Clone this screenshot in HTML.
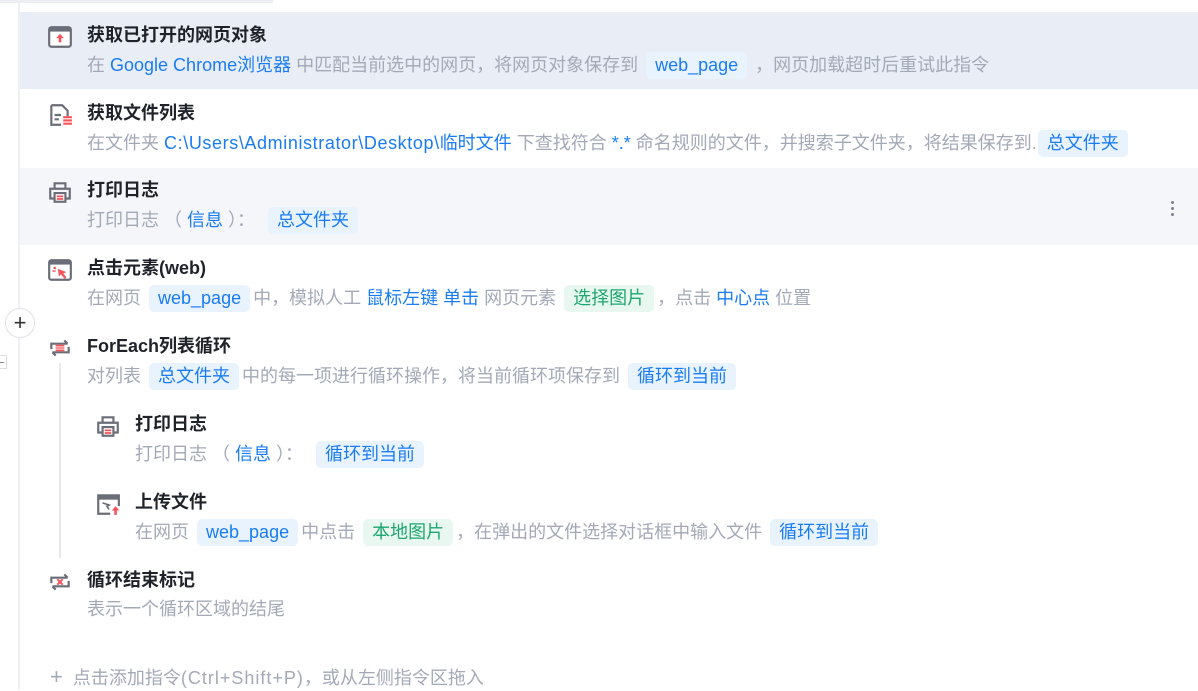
<!DOCTYPE html>
<html><head><meta charset="utf-8"><style>
*{margin:0;padding:0;box-sizing:border-box}
body{width:1198px;height:690px;background:#fff;position:relative;overflow:hidden;font-family:"Liberation Sans","Noto Sans CJK SC",sans-serif}
.bar{position:absolute;left:0;top:0;width:273px;height:3px;background:#eceef3}
.vl{position:absolute;left:18px;top:0;width:2px;height:690px;background:#eef0f5}
.row{position:absolute;left:20px;right:0;height:77px}
.t{position:absolute;font-size:18px;font-weight:bold;color:#1f2329;white-space:nowrap;line-height:24px}
.d{position:absolute;font-size:18px;color:#a3a9b7;white-space:nowrap;line-height:26px}
.b{color:#1a7cf5}
.tag{display:inline-block;background:#e9f3fe;color:#1a7cf5;padding:0 9px;border-radius:5px;line-height:27px;margin:0 3px}
.g{background:#e8f8f0;color:#1ea672}
.ic{position:absolute;width:26px;height:26px}
</style></head><body>
<div class="bar"></div>
<div class="vl"></div>
<div class="row" style="top:12px;background:#e9edf5"></div>
<div class="row" style="top:168px;background:#f4f6fa"></div>

<svg class="ic" style="left:47px;top:24px" viewBox="0 0 24 24"><rect x="2" y="3" width="20" height="18" rx="2" fill="#fff" stroke="#6b6e78" stroke-width="2"/><rect x="2" y="3" width="20" height="4" fill="#6b6e78"/><path d="M12 9l-3.5 4h2.3v4h2.4v-4h2.3z" fill="#f4545a"/></svg>
<svg class="ic" style="left:47px;top:102px" viewBox="0 0 24 24"><path d="M4 3h10l5 5v5M4 3v18h9" fill="none" stroke="#6b6e78" stroke-width="2"/><path d="M7 12h6M7 16h4" stroke="#6b6e78" stroke-width="2"/><path d="M15 14h8M15 17h8M15 20h8" stroke="#f4545a" stroke-width="2"/></svg>
<svg class="ic" style="left:47px;top:179px" viewBox="0 0 24 24"><path d="M7 8V4h10v4M6 18H3v-9h18v9h-3" fill="none" stroke="#6b6e78" stroke-width="2"/><rect x="7" y="13" width="10" height="8" fill="#fff" stroke="#6b6e78" stroke-width="2"/><path d="M9 16h6M9 18.5h6" stroke="#f4545a" stroke-width="1.6"/></svg>
<svg class="ic" style="left:47px;top:257px" viewBox="0 0 24 24"><rect x="2" y="3" width="20" height="18" rx="2" fill="#fff" stroke="#6b6e78" stroke-width="2"/><rect x="2" y="3" width="20" height="4" fill="#6b6e78"/><path d="M10 11l8 3-3 1 3 4-2 1-3-4-2 2z" fill="#f4545a"/><path d="M6 10l2 1M5 13h3M7 9l1 2" stroke="#f4545a" stroke-width="1.3"/></svg>
<svg class="ic" style="left:47px;top:335px" viewBox="0 0 24 24"><path d="M4 13V8h15M16 5l3 3M20 11v5H5M8 19l-3-3" fill="none" stroke="#6b6e78" stroke-width="2"/><rect x="8" y="9" width="8" height="6" fill="#f4545a"/><path d="M8 11h8M8 13h8" stroke="#fff" stroke-width="0.8"/></svg>
<svg class="ic" style="left:95px;top:413px" viewBox="0 0 24 24"><path d="M7 8V4h10v4M6 18H3v-9h18v9h-3" fill="none" stroke="#6b6e78" stroke-width="2"/><rect x="7" y="13" width="10" height="8" fill="#fff" stroke="#6b6e78" stroke-width="2"/><path d="M9 16h6M9 18.5h6" stroke="#f4545a" stroke-width="1.6"/></svg>
<svg class="ic" style="left:95px;top:491px" viewBox="0 0 24 24"><path d="M14 21H3V4h19v10" fill="none" stroke="#6b6e78" stroke-width="2"/><rect x="3" y="4" width="19" height="4" fill="#6b6e78"/><path d="M7 11l6 2-2 1 2 3" fill="none" stroke="#6b6e78" stroke-width="1.5"/><path d="M19 14l-3.5 4h2.3v4h2.4v-4h2.3z" fill="#f4545a"/></svg>
<svg class="ic" style="left:47px;top:569px" viewBox="0 0 24 24"><path d="M4 13V8h15M16 5l3 3M20 11v5H5M8 19l-3-3" fill="none" stroke="#6b6e78" stroke-width="2"/><path d="M9.5 9.5l5 5M14.5 9.5l-5 5" stroke="#f4545a" stroke-width="1.8"/></svg>

<div class="t" style="left:87px;top:23px">获取已打开的网页对象</div>
<div class="d" style="left:87px;top:52px">在 <span class="b">Google Chrome浏览器</span> 中匹配当前选中的网页，将网页对象保存到 <span class="tag">web_page</span> ，网页加载超时后重试此指令</div>

<div class="t" style="left:87px;top:101px">获取文件列表</div>
<div class="d" style="left:87px;top:130px">在文件夹 <span class="b" style="letter-spacing:0.6px">C:\Users\Administrator\Desktop\</span><span class="b">临时文件</span> 下查找符合 <span class="b">*.*</span> 命名规则的文件，并搜索子文件夹，将结果保存到.<span class="tag" style="margin-left:1px">总文件夹</span></div>

<div class="t" style="left:87px;top:178px">打印日志</div>
<div class="d" style="left:87px;top:207px">打印日志 （ <span class="b">信息</span> ）： <span class="tag" style="margin-left:8px">总文件夹</span></div>
<div style="position:absolute;left:1171px;top:201px;width:3px">
<div style="width:3px;height:3px;border-radius:2px;background:#7b8190;margin-bottom:3px"></div><div style="width:3px;height:3px;border-radius:2px;background:#7b8190;margin-bottom:3px"></div><div style="width:3px;height:3px;border-radius:2px;background:#7b8190"></div></div>

<div class="t" style="left:87px;top:256px">点击元素(web)</div>
<div class="d" style="left:87px;top:285px">在网页 <span class="tag">web_page</span>中，模拟人工 <span class="b">鼠标左键</span> <span class="b">单击</span> 网页元素 <span class="tag g">选择图片</span>，点击 <span class="b">中心点</span> 位置</div>

<div class="t" style="left:87px;top:334px">ForEach列表循环</div>
<div class="d" style="left:87px;top:363px">对列表 <span class="tag">总文件夹</span>中的每一项进行循环操作，将当前循环项保存到 <span class="tag">循环到当前</span></div>

<div style="position:absolute;left:59px;top:363px;width:2px;height:195px;background:#e6e8ee"></div>

<div class="t" style="left:135px;top:412px">打印日志</div>
<div class="d" style="left:135px;top:441px">打印日志 （ <span class="b">信息</span> ）： <span class="tag" style="margin-left:8px">循环到当前</span></div>

<div class="t" style="left:135px;top:490px">上传文件</div>
<div class="d" style="left:135px;top:519px">在网页 <span class="tag">web_page</span>中点击 <span class="tag g">本地图片</span>，在弹出的文件选择对话框中输入文件 <span class="tag">循环到当前</span></div>

<div class="t" style="left:87px;top:568px">循环结束标记</div>
<div class="d" style="left:87px;top:596px">表示一个循环区域的结尾</div>

<div style="position:absolute;left:5px;top:308px;width:30px;height:30px;border-radius:50%;border:1px solid #dfe2e8;background:#fff;text-align:center;line-height:27px;font-size:22px;color:#333">+</div>
<div style="position:absolute;left:-2px;top:355px;width:9px;height:14px;border:1px solid #d8dbe2;background:#fff"><div style="position:absolute;left:0;top:6px;width:5px;height:1px;background:#888"></div></div>

<div class="d" style="left:50px;top:664px"><span style="font-size:22px;margin-right:10px">+</span>点击添加指令<span style="letter-spacing:1px">(Ctrl+Shift+P)</span>，或从左侧指令区拖入</div>
</body></html>
